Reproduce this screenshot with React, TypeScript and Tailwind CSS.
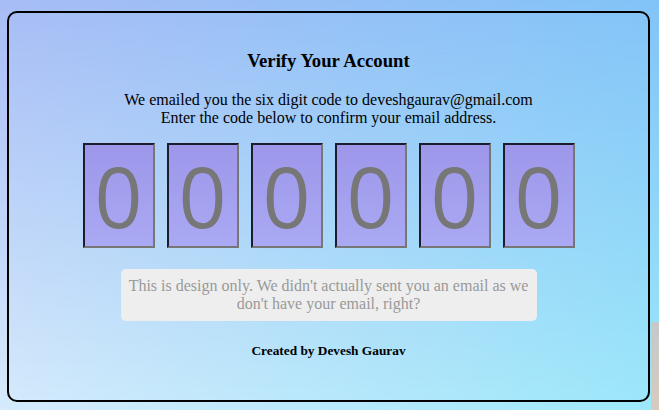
export default function App() {
  const digits = ["0", "0", "0", "0", "0", "0"];

  return (
    <main className="grid w-[659px] h-[410px] overflow-hidden bg-[linear-gradient(to_right,#d6ebfc,#9ce8fa)]">
      {/* top colour layer, faded out towards the bottom */}
      <div className="col-start-1 row-start-1 bg-[linear-gradient(to_right,#a7bcf5,#82c3f7)] [mask-image:linear-gradient(to_bottom,black,transparent)]" />
      <div className="col-start-1 row-start-1 self-end justify-self-end w-[8px] h-[88px] bg-[#d8cbbd]" />

      <section className="relative col-start-1 row-start-1 ml-[7px] mt-[11px] w-[643px] h-[391px] border-2 border-black rounded-[10px] flex flex-col items-center font-['Liberation_Serif',serif] text-black">
        <h3 className="mt-[37px] text-[18.72px] leading-[22px] font-bold">Verify Your Account</h3>

        <p className="mt-[19px] text-[16px] leading-[18px] text-center">
          We emailed you the six digit code to deveshgaurav@gmail.com
          <br />
          Enter the code below to confirm your email address.
        </p>

        <div className="mt-[16px] flex gap-[12px]">
          {digits.map((d, i) => (
            <div
              key={i}
              className="w-[72px] h-[105px] border-2 border-t-[#1c1c2c] border-l-[#1c1c2c] border-b-[#767676] border-r-[#767676] bg-[linear-gradient(#9d97ea,#aaa9f3)] flex items-center justify-center font-['Open_Sans',sans-serif] text-[84px] leading-none text-[#777777]"
            >
              {d}
            </div>
          ))}
        </div>

        <div className="mt-[21px] w-[416px] rounded-[5px] bg-[#eeeeee] px-[8px] py-[8px] text-center text-[16px] leading-[18px] text-[#999999]">
          This is design only. We didn't actually sent you an email as we don't have your email, right?
        </div>

        <p className="mt-[22px] text-[13.33px] leading-[16px] font-bold">Created by Devesh Gaurav</p>
      </section>
    </main>
  );
}
